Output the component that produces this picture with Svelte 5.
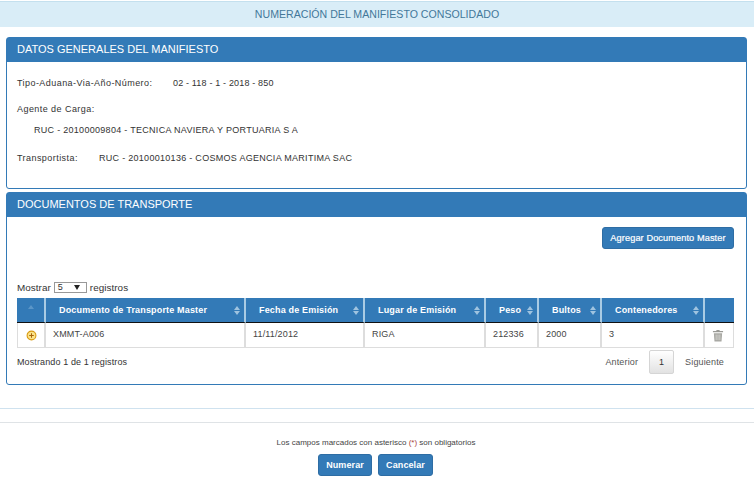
<script>
	const columns = [
		{ label: 'Documento de Transporte Master', width: 200 },
		{ label: 'Fecha de Emisión', width: 119 },
		{ label: 'Lugar de Emisión', width: 121 },
		{ label: 'Peso', width: 53 },
		{ label: 'Bultos', width: 63 },
		{ label: 'Contenedores', width: 103 }
	];
	const row = ['XMMT-A006', '11/11/2012', 'RIGA', '212336', '2000', '3'];
</script>

<div class="page">
	<div class="title">NUMERACIÓN DEL MANIFIESTO CONSOLIDADO</div>

	<section class="panel first">
		<h2>DATOS GENERALES DEL MANIFIESTO</h2>
		<div class="general">
			<div class="line one"><span class="label">Tipo-Aduana-Via-Año-Número:</span><span class="value short">02 - 118 - 1 - 2018 - 850</span></div>
			<div class="line two"><span class="label">Agente de Carga:</span></div>
			<div class="line three"><span class="value">RUC - 20100009804 - TECNICA NAVIERA Y PORTUARIA S A</span></div>
			<div class="line four"><span class="label">Transportista:</span><span class="value">RUC - 20100010136 - COSMOS AGENCIA MARITIMA SAC</span></div>
		</div>
	</section>

	<section class="panel second">
		<h2>DOCUMENTOS DE TRANSPORTE</h2>
		<div class="docs">
			<div class="actions"><button class="btn add">Agregar Documento Master</button></div>
			<div class="length">
				Mostrar
				<span class="select">5<span class="arrow"></span></span>
				registros
			</div>
			<table>
				<thead>
					<tr>
						<th class="first-col"><span class="sort-up"></span></th>
						{#each columns as col}
							<th style="width: {col.width}px">
								<div class="head"><span>{col.label}</span><span class="sort"><i class="up"></i><i class="down"></i></span></div>
							</th>
						{/each}
						<th class="last-col"></th>
					</tr>
				</thead>
				<tbody>
					<tr>
						<td class="icon-cell">
							<svg width="11" height="11" viewBox="0 0 12 12">
								<circle cx="6" cy="6" r="4.8" fill="#fbe38a" stroke="#d99a10" stroke-width="1.2" />
								<path d="M3.5 6h5M6 3.5v5" stroke="#a8650a" stroke-width="1.1" />
							</svg>
						</td>
						{#each row as cell}
							<td>{cell}</td>
						{/each}
						<td class="icon-cell trash">
							<svg width="12" height="13" viewBox="0 0 13 14">
								<path d="M5 1h3l.5 1H12v1.6H1V2h3.500z" fill="#9a9a95" />
								<path d="M2 4.500h9L10.300 13.500H2.700z" fill="#a8a8a3" />
								<path d="M4.500 6v6M6.500 6v6M8.500 6v6" stroke="#d8d8d4" stroke-width="0.9" />
							</svg>
						</td>
					</tr>
				</tbody>
			</table>
			<div class="foot">
				<span class="info">Mostrando 1 de 1 registros</span>
				<div class="pager">
					<span>Anterior</span>
					<span class="current">1</span>
					<span class="next">Siguiente</span>
				</div>
			</div>
		</div>
	</section>

	<div class="rule blue"></div>
	<div class="rule grey"></div>

	<p class="note">Los campos marcados con asterisco <span class="star">(*)</span> son obligatorios</p>
	<div class="buttons">
		<button class="btn numerar">Numerar</button>
		<button class="btn cancelar">Cancelar</button>
	</div>
</div>

<style>
	:global(body) {
		margin: 0;
		background: #fff;
	}

	.page {
		width: 754px;
		height: 494px;
		overflow: hidden;
		font-family: "Liberation Sans", Arial, sans-serif;
		font-size: 9px;
		color: #333;
	}

	.title {
		height: 25px;
		margin-top: 2px;
		background: #d9edf7;
		color: #43789a;
		font-size: 10.6px;
		line-height: 25px;
		text-align: center;
		box-shadow: 0 -1px 0 #c4e0ee;
	}

	.panel {
		margin: 0 7px 0 6px;
		border: 1px solid #337ab7;
		border-radius: 3px;
		box-sizing: border-box;
		background: #fff;
	}

	.first {
		margin-top: 10px;
		height: 152px;
	}

	.second {
		margin-top: 3px;
		height: 193px;
	}

	h2 {
		margin: 0;
		height: 24px;
		padding-left: 10px;
		background: #337ab7;
		color: #fff;
		font-size: 11px;
		font-weight: normal;
		line-height: 23px;
	}

	.general {
		padding: 0 10px;
	}

	.line {
		display: flex;
		height: 11px;
		line-height: 11px;
	}

	.label {
		letter-spacing: 0.44px;
	}

	.one {
		margin-top: 16px;
	}

	.one .label {
		width: 156px;
	}

	.two {
		margin-top: 15px;
	}

	.three {
		margin-top: 10px;
		padding-left: 17px;
	}

	.four {
		margin-top: 17px;
	}

	.four .label {
		width: 82px;
	}

	.value {
		letter-spacing: 0.29px;
	}

	.value.short {
		letter-spacing: 0.17px;
	}

	.docs {
		padding: 10px 11px 0 10px;
	}

	.actions {
		display: flex;
		justify-content: flex-end;
		height: 22px;
		padding-right: 1px;
	}

	.btn {
		height: 22px;
		padding: 0;
		border: 1px solid #2e6da4;
		border-radius: 3px;
		background: #337ab7;
		color: #fff;
		font-family: inherit;
		font-size: 9px;
		font-weight: bold;
		letter-spacing: 0.1px;
	}

	.add {
		width: 132px;
		font-size: 9.2px;
		font-weight: normal;
		-webkit-text-stroke: 0.2px #fff;
	}

	.length {
		display: flex;
		align-items: center;
		gap: 3px;
		height: 12px;
		margin-top: 32px;
		margin-bottom: 5px;
		font-size: 9.9px;
		letter-spacing: 0.05px;
	}

	.select {
		position: relative;
		display: block;
		box-sizing: border-box;
		width: 33px;
		height: 11px;
		padding-left: 3px;
		border: 1px solid #999;
		line-height: 9px;
		font-size: 9px;
	}

	.arrow {
		position: absolute;
		top: 2px;
		right: 6px;
		border-left: 3px solid transparent;
		border-right: 3px solid transparent;
		border-top: 5px solid #222;
	}

	table {
		width: 717px;
		border-collapse: separate;
		border-spacing: 0;
		table-layout: fixed;
	}

	th {
		height: 25px;
		padding: 0 4px 0 13px;
		box-sizing: border-box;
		background: #337ab7;
		border-right: 2px solid #a9cbe4;
		border-bottom: 1px solid #111;
		color: #fff;
		font-size: 9px;
		font-weight: bold;
		text-align: left;
		letter-spacing: 0.17px;
		white-space: nowrap;
	}

	.first-col {
		width: 29px;
		padding: 0;
		text-align: center;
	}

	.last-col {
		width: 29px;
		border-right: 0;
	}

	.head {
		display: flex;
		justify-content: space-between;
		align-items: center;
	}

	.sort {
		display: flex;
		flex-direction: column;
		gap: 1px;
	}

	.sort i {
		display: block;
		border-left: 3px solid transparent;
		border-right: 3px solid transparent;
	}

	.up {
		border-bottom: 4px solid #9fc3e0;
	}

	.down {
		border-top: 4px solid #9fc3e0;
	}

	.sort-up {
		display: inline-block;
		border-left: 3px solid transparent;
		border-right: 3px solid transparent;
		border-bottom: 4px solid #5b96c8;
		vertical-align: 5px;
	}

	td {
		height: 25px;
		padding: 0 0 2px 7px;
		box-sizing: border-box;
		border-right: 2px solid #ddd;
		border-bottom: 1px solid #ddd;
		color: #444;
		font-size: 9px;
		letter-spacing: 0.15px;
	}

	td:first-child {
		border-left: 1px solid #ddd;
	}

	td:last-child {
		border-right: 1px solid #ddd;
	}

	.icon-cell {
		padding: 3px 0 0;
		text-align: center;
	}

	.trash {
		padding-right: 3px;
	}

	.foot {
		display: flex;
		justify-content: space-between;
		align-items: flex-start;
		margin-top: 2px;
	}

	.info {
		margin-top: 7px;
		letter-spacing: 0.12px;
	}

	.pager {
		display: flex;
		align-items: center;
		gap: 11px;
		padding-right: 11px;
		color: #555;
		letter-spacing: 0.15px;
	}

	.current {
		display: block;
		width: 25px;
		height: 24px;
		box-sizing: border-box;
		border: 1px solid #d5d5d5;
		border-radius: 2px;
		background: linear-gradient(#fff, #e2e2e2);
		line-height: 22px;
		text-align: center;
		color: #333;
	}

	.rule {
		height: 1px;
	}

	.blue {
		margin-top: 23px;
		background: #cfe2ef;
	}

	.grey {
		margin-top: 13px;
		background: #dfe3e6;
	}

	.note {
		margin: 14px 0 0;
		padding-right: 2px;
		height: 11px;
		color: #444;
		font-size: 8px;
		line-height: 11px;
		text-align: center;
	}

	.star {
		color: #a94442;
	}

	.buttons {
		display: flex;
		justify-content: center;
		gap: 6px;
		margin-top: 6px;
		padding-right: 3px;
	}

	.numerar {
		width: 54px;
	}

	.cancelar {
		width: 55px;
	}
</style>
